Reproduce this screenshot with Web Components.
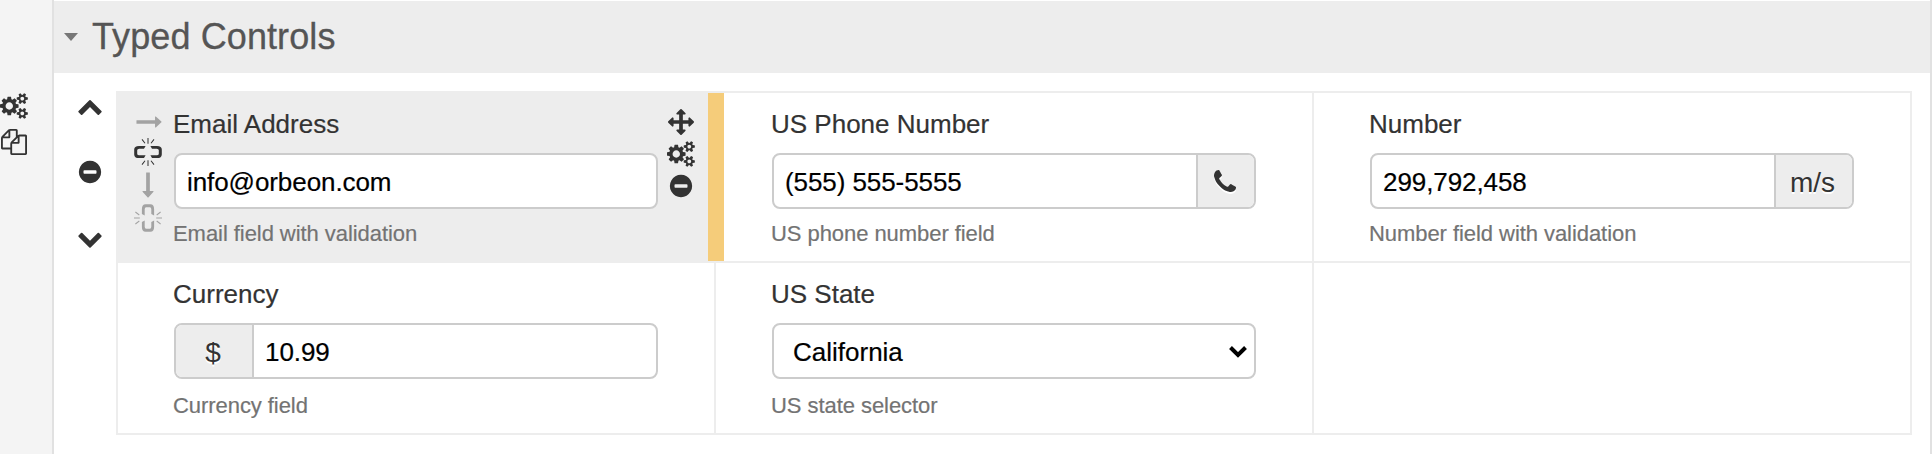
<!DOCTYPE html>
<html lang="en">
<head>
<meta charset="utf-8">
<title>Typed Controls</title>
<style>
html, body { margin: 0; height: 100%; overflow: hidden; background: #fff; }
body { font: 26px/32px "Liberation Sans", Arial, sans-serif; color: #333; }
</style>
</head>
<body>
<form-builder></form-builder>
<script>
const ICONS = {
  cogs: ['0 0 1920 1792', 'M896 896q0-106-75-181t-181-75-181 75-75 181 75 181 181 75 181-75 75-181zm768 512q0-52-38-90t-90-38-90 38-38 90q0 53 37.5 90.5t90.5 37.5 90.5-37.5 37.5-90.5zm0-1024q0-52-38-90t-90-38-90 38-38 90q0 53 37.5 90.5t90.5 37.5 90.5-37.5 37.5-90.5zm-384 421v185q0 10-7 19.5t-16 10.5l-155 24q-11 35-32 76 34 48 90 115 7 11 7 20 0 12-7 19-23 30-82.5 89.5t-78.5 59.5q-11 0-21-7l-115-90q-37 19-77 31-11 108-23 155-7 24-30 24h-186q-11 0-20-7.5t-10-17.5l-23-153q-34-10-75-31l-118 89q-7 7-20 7-11 0-21-8-144-133-144-160 0-9 7-19 10-14 41-53t47-61q-23-44-35-82l-152-24q-10-1-17-9.5t-7-19.5v-185q0-10 7-19.5t16-10.5l155-24q11-35 32-76-34-48-90-115-7-11-7-20 0-12 7-20 22-30 82-89t79-59q11 0 21 7l115 90q34-18 77-32 11-108 23-154 7-24 30-24h186q11 0 20 7.5t10 17.5l23 153q34 10 75 31l118-89q8-7 20-7 11 0 21 8 144 133 144 160 0 8-7 19-12 16-42 54t-45 60q23 48 34 82l152 23q10 2 17 10.5t7 19.5zm640 533v140q0 16-149 31-12 27-30 52 51 113 51 138 0 4-4 7-122 71-124 71-8 0-46-47t-52-68q-20 2-30 2t-30-2q-14 21-52 68t-46 47q-2 0-124-71-4-3-4-7 0-25 51-138-18-25-30-52-149-15-149-31v-140q0-16 149-31 13-29 30-52-51-113-51-138 0-4 4-7 4-2 35-20t59-34 30-16q8 0 46 46.5t52 67.5q20-2 30-2t30 2q51-71 92-112l6-2q4 0 124 70 4 3 4 7 0 25-51 138 17 23 30 52 149 15 149 31zm0-1024v140q0 16-149 31-12 27-30 52 51 113 51 138 0 4-4 7-122 71-124 71-8 0-46-47t-52-68q-20 2-30 2t-30-2q-14 21-52 68t-46 47q-2 0-124-71-4-3-4-7 0-25 51-138-18-25-30-52-149-15-149-31v-140q0-16 149-31 13-29 30-52-51-113-51-138 0-4 4-7 4-2 35-20t59-34 30-16q8 0 46 46.5t52 67.5q20-2 30-2t30 2q51-71 92-112l6-2q4 0 124 70 4 3 4 7 0 25-51 138 17 23 30 52 149 15 149 31z'],
  copy: ['0 0 1792 1792', 'M1696 384q40 0 68 28t28 68v1216q0 40-28 68t-68 28h-960q-40 0-68-28t-28-68v-288h-544q-40 0-68-28t-28-68v-672q0-40 20-88t48-76l408-408q28-28 76-48t88-20h416q40 0 68 28t28 68v328q68-40 128-40h416zm-544 213l-299 299h299v-299zm-640-384l-299 299h299v-299zm196 647l316-316v-416h-384v416q0 40-28 68t-68 28h-416v640h512v-256q0-40 20-88t48-76zm956 804v-1152h-384v416q0 40-28 68t-68 28h-416v640h896z'],
  up: ['0 0 1792 1792', 'M1683 1331l-166 165q-19 19-45 19t-45-19l-531-531-531 531q-19 19-45 19t-45-19l-166-165q-19-19-19-45.5t19-45.5l742-741q19-19 45-19t45 19l742 741q19 19 19 45.5t-19 45.5z'],
  down: ['0 0 1792 1792', 'M1683 808l-742 741q-19 19-45 19t-45-19l-742-741q-19-19-19-45.5t19-45.5l166-165q19-19 45-19t45 19l531 531 531-531q19-19 45-19t45 19l166 165q19 19 19 45.5t-19 45.5z'],
  minus: ['0 0 1792 1792', 'M1344 960v-128q0-26-19-45t-45-19h-768q-26 0-45 19t-19 45v128q0 26 19 45t45 19h768q26 0 45-19t19-45zm320-64q0 209-103 385.5t-279.5 279.5-385.5 103-385.5-103-279.5-279.5-103-385.5 103-385.5 279.5-279.5 385.5-103 385.5 103 279.5 279.5 103 385.5z'],
  move: ['0 0 1792 1792', 'M1792 896q0 26-19 45l-256 256q-19 19-45 19t-45-19-19-45v-128h-384v384h128q26 0 45 19t19 45-19 45l-256 256q-19 19-45 19t-45-19l-256-256q-19-19-19-45t19-45 45-19h128v-384h-384v128q0 26-19 45t-45 19-45-19l-256-256q-19-19-19-45t19-45l256-256q19-19 45-19t45 19 19 45v128h384v-384h-128q-26 0-45-19t-19-45 19-45l256-256q19-19 45-19t45 19l256 256q19 19 19 45t-19 45-45 19h-128v384h384v-128q0-26 19-45t45-19 45 19l256 256q19 19 19 45z'],
  phone: ['0 0 1792 1792', 'M1600 1240q0 27-10 70.5t-21 68.5q-21 50-122 106-94 51-186 51-27 0-53-3.5t-57.5-12.5-47-14.5-55.5-20.5-49-18q-98-35-175-83-127-79-264-216t-216-264q-48-77-83-175-3-9-18-49t-20.5-55.5-14.5-47-12.5-57.5-3.5-53q0-92 51-186 56-101 106-122 25-11 68.5-21t70.5-10q14 0 21 3 18 6 53 76 11 19 30 54t35 63.5 31 53.5q3 4 17.5 25t21.5 35.5 7 28.5q0 20-28.5 50t-62 55-62 53-28.5 46q0 9 5 22.5t8.5 20.5 14 24 11.5 19q76 137 174 235t235 174q2 1 19 11.5t24 14 20.5 8.5 22.5 5q18 0 46-28.5t53-62 55-62 50-28.5q14 0 28.5 7t35.5 21.5 25 17.5q25 15 53.5 31t63.5 35 54 30q70 35 76 53 3 7 3 21z'],
  arrow: ['0 0 1792 1792', 'M1760 893q0 14-10 24l-384 354q-16 14-35 6-19-9-19-29v-224h-1248q-14 0-23-9t-9-23v-192q0-14 9-23t23-9h1248v-224q0-21 19-29t35 5l384 350q10 10 10 23z'],
  unlink: ['0 0 28 28', 'M11.6 7.9H5Q.2 7.9.2 11.6v4.8Q.2 20.100 5 20.100h5l1.600-2.800H5.300q-2.100 0-2.100-1.500v-3.600q0-1.500 2.100-1.500h4.700zM16.400 7.900H23q4.800 0 4.800 3.700v4.800q0 3.700-4.800 3.700h-5l-1.600-2.800h6.300q2.100 0 2.100-1.500v-3.600q0-1.500-2.100-1.500h-4.700zM13.500 0h1v5.800h-1zM13.500 22.200h1V28h-1zM7.600 1.700l.8-.6 3 3.900-.8.6zM20.400 1.700l-.8-.6-3 3.900.8.6zM7.600 26.300l.8.6 3-3.900-.8-.6zM20.400 26.300l-.8.6-3-3.900.8-.6z']
};

function define(name, html, setup) {
  const tpl = document.createElement('template');
  tpl.innerHTML = html;
  customElements.define(name, class extends HTMLElement {
    constructor() {
      super();
      this.attachShadow({ mode: 'open' }).append(tpl.content.cloneNode(true));
    }
    connectedCallback() { if (setup) setup(this, this.shadowRoot); }
  });
}

define('fb-icon', `
<style>
  :host { display: block; flex: none; height: var(--size, 26px); }
  svg { display: block; height: 100%; width: auto; fill: currentColor; overflow: visible; }
  :host([turn]) svg { transform: rotate(90deg); }
  :host([faded]) { color: #a3a3a3; }
</style>
<svg aria-hidden="true"><path/></svg>`, (el, root) => {
  const [box, d] = ICONS[el.getAttribute('name')];
  root.querySelector('svg').setAttribute('viewBox', box);
  root.querySelector('path').setAttribute('d', d);
});

define('fb-sidebar', `
<style>
  :host { display: flex; flex-direction: column; gap: 10.300px; box-sizing: border-box; padding-top: 92.700px;
          background: #f4f4f4; border-right: 2px solid #e1e1e1; }
  .copy { padding-left: 1.400px; }
</style>
<fb-icon name="cogs"></fb-icon>
<fb-icon class="copy" name="copy"></fb-icon>`);

define('fb-section-header', `
<style>
  :host { display: flex; align-items: center; height: 72px; background: #ededed; color: #555; margin-top: 1px; }
  svg { width: 14px; height: 8px; margin-left: 10px; fill: #777; }
  h2 { margin: 0 0 0 14px; font-size: 36px; line-height: 44px; font-weight: 400; padding-bottom: 1px; letter-spacing: .1px;
       -webkit-text-stroke: .3px #555; }
</style>
<svg viewBox="0 0 14 8"><path d="M0 0h14L7 8z"/></svg>
<h2><slot></slot></h2>`);

define('fb-row-tools', `
<style>
  :host { display: flex; flex-direction: column; justify-content: space-between; align-items: center;
          height: 157.600px; padding-top: 2px; width: 71px; }
</style>
<fb-icon name="up"></fb-icon>
<fb-icon name="minus"></fb-icon>
<fb-icon name="down"></fb-icon>`);

define('fb-field', `
<style>
  :host { display: block; }
  label, p { display: block; margin: 0 0 0 -1px; white-space: nowrap; }
  label { line-height: 32px; padding-bottom: 13px; -webkit-text-stroke: .2px #333; }
  .box { display: flex; box-sizing: border-box; height: 56px; border: 2px solid #ccc; border-radius: 8px;
         overflow: hidden; background: #fff; color: #000; }
  .value { flex: 1; padding: 1px 11px 0; line-height: 52px; letter-spacing: -.08px; -webkit-text-stroke: .2px #000; }
  :host([select]) .value { padding-left: 19px; letter-spacing: 0; }
  p { font-size: 22px; line-height: 28px; color: #737373; padding-top: var(--hint-gap, 11px); letter-spacing: -.06px;
      -webkit-text-stroke: .2px #737373; }
  svg { display: none; align-self: center; width: 18px; height: 12px; margin: 1px 7px 0 0; fill: none; stroke: #000; stroke-width: 4; }
  :host([select]) svg { display: block; }
</style>
<label></label>
<div class="box"><slot name="before"></slot><span class="value"></span><svg viewBox="0 0 18 12"><path d="M1.500 1.500 9 9l7.500-7.500"/></svg><slot name="after"></slot></div>
<p></p>`, (el, root) => {
  root.querySelector('label').textContent = el.getAttribute('label');
  root.querySelector('.value').textContent = el.getAttribute('value');
  root.querySelector('p').textContent = el.getAttribute('hint');
});

define('fb-addon', `
<style>
  :host { display: flex; align-items: center; justify-content: center; box-sizing: border-box; flex: none;
          background: #ededed; color: #333; font-size: 28px; line-height: 50px; padding: 4px 3px 0 0;
          text-shadow: 0 2px 0 #fff; --size: 28px; }
  :host([slot=after]) { border-left: 2px solid #ccc; }
  :host([slot=before]) { border-right: 2px solid #ccc; padding-right: 2px; }
  ::slotted(fb-icon) { filter: drop-shadow(0 2px 0 #fff); margin-top: -2px; }
</style>
<slot></slot>`);

define('fb-cell', `
<style>
  :host { display: grid; grid-template-columns: 56px 484px 56px; position: relative; background: #fff; }
  :host([selected]) { background: #ededed; }
  .body { padding-top: 15px; }
  .tools { display: flex; flex-direction: column; }
  .handle { display: none; }
  :host([selected]) .handle { display: block; position: absolute; z-index: 1; top: 0; bottom: 0; right: -10px; width: 16px; background: #f5cc7a; }
</style>
<div class="tools"><slot name="left"></slot></div>
<div class="body"><slot></slot></div>
<div class="tools"><slot name="right"></slot></div>
<div class="handle"></div>`);

define('fb-cell-merge', `
<style>
  :host { display: flex; flex-direction: column; padding: 15.700px 0 0 15.500px; width: 28px; }
  fb-icon { margin-left: 1px; }
  .h { margin-left: 2.800px; }
  .link { --size: 28px; margin-left: 0; }
  .a { margin-top: 3.300px; }
  .b { margin-top: 5.800px; }
  .c { margin-top: 6.200px; }
</style>
<fb-icon class="h" name="arrow" faded></fb-icon>
<fb-icon class="link a" name="unlink"></fb-icon>
<fb-icon class="b" name="arrow" turn faded></fb-icon>
<fb-icon class="link c" name="unlink" turn faded></fb-icon>`);

define('fb-cell-tools', `
<style>
  :host { display: flex; flex-direction: column; align-items: center; gap: 6px; padding-top: 15.700px; width: 45px; }
</style>
<fb-icon name="move"></fb-icon>
<fb-icon name="cogs"></fb-icon>
<fb-icon name="minus"></fb-icon>`);

define('fb-grid', `
<style>
  :host { display: grid; grid-template: 168px 170px / repeat(3, 596px); gap: 2px; padding: 2px; background: #ededed; }
</style>
<slot></slot>`);

define('form-builder', `
<style>
  :host { display: grid; grid-template-columns: 54px 1fr; height: 454px; }
  main { border-right: 2px solid #e1e1e1; min-width: 0; }
  .content { display: grid; grid-template-columns: 62px 1796px; padding-top: 18px; align-items: start; }
  fb-row-tools { height: 157.600px; }
  .row2 { --hint-gap: 13px; }
</style>
<fb-sidebar></fb-sidebar>
<main>
  <fb-section-header>Typed Controls</fb-section-header>
  <div class="content">
    <fb-row-tools></fb-row-tools>
    <fb-grid>
      <fb-cell selected>
        <fb-cell-merge slot="left"></fb-cell-merge>
        <fb-field label="Email Address" value="info@orbeon.com" hint="Email field with validation"></fb-field>
        <fb-cell-tools slot="right"></fb-cell-tools>
      </fb-cell>
      <fb-cell>
        <fb-field label="US Phone Number" value="(555) 555-5555" hint="US phone number field">
          <fb-addon slot="after" style="width:58px"><fb-icon name="phone"></fb-icon></fb-addon>
        </fb-field>
      </fb-cell>
      <fb-cell>
        <fb-field label="Number" value="299,792,458" hint="Number field with validation">
          <fb-addon slot="after" style="width:78px">m/s</fb-addon>
        </fb-field>
      </fb-cell>
      <fb-cell class="row2">
        <fb-field label="Currency" value="10.99" hint="Currency field">
          <fb-addon slot="before" style="width:78px">$</fb-addon>
        </fb-field>
      </fb-cell>
      <fb-cell class="row2">
        <fb-field select label="US State" value="California" hint="US state selector"></fb-field>
      </fb-cell>
      <fb-cell></fb-cell>
    </fb-grid>
  </div>
</main>`);
</script>
</body>
</html>
